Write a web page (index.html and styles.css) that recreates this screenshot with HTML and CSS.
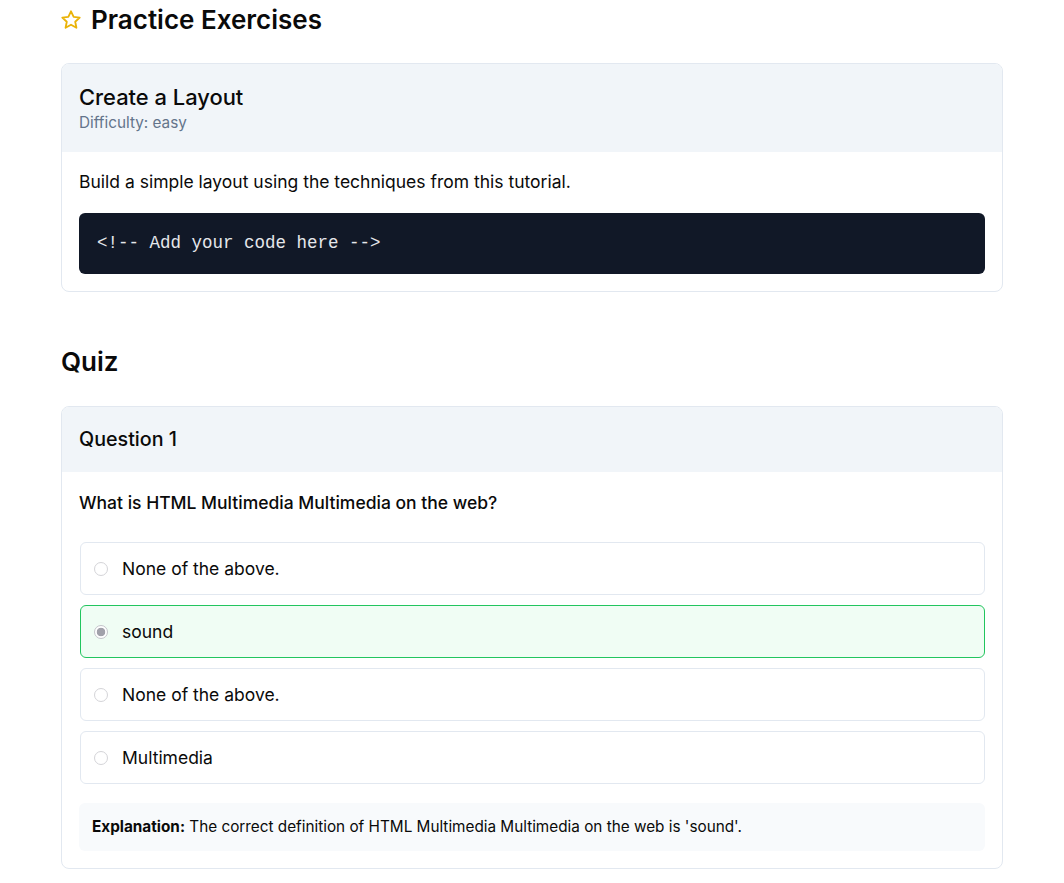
FILE: index.html
```html
<!DOCTYPE html>
<html lang="en">
<head>
<meta charset="utf-8">
<title>Practice Exercises</title>
<link rel="stylesheet" href="styles.css">
</head>
<body>
<main class="page">
  <section class="section">
    <h2 class="section-title">
      <svg class="star" width="22" height="22" viewBox="0 0 24 24" fill="none" stroke="#eab308" stroke-width="2" stroke-linejoin="round"><polygon points="12 2.5 14.9 8.6 21.5 9.4 16.6 13.9 17.9 20.5 12 17.2 6.1 20.5 7.4 13.9 2.5 9.4 9.1 8.6"/></svg>
      Practice Exercises
    </h2>
    <div class="card">
      <div class="card-header tall">
        <h3 class="card-title">Create a Layout</h3>
        <div class="difficulty">Difficulty: easy</div>
      </div>
      <div class="card-body">
        <p class="desc">Build a simple layout using the techniques from this tutorial.</p>
        <pre class="code">&lt;!-- Add your code here --&gt;</pre>
      </div>
    </div>
  </section>

  <section class="section quiz">
    <h2 class="section-title">Quiz</h2>
    <div class="card">
      <div class="card-header">
        <h3 class="question-title">Question 1</h3>
      </div>
      <div class="card-body">
        <p class="question">What is HTML Multimedia Multimedia on the web?</p>
        <div class="options">
          <label class="option"><input type="radio" name="q1" disabled><span>None of the above.</span></label>
          <label class="option correct"><input type="radio" name="q1" checked disabled><span>sound</span></label>
          <label class="option"><input type="radio" name="q1" disabled><span>None of the above.</span></label>
          <label class="option"><input type="radio" name="q1" disabled><span>Multimedia</span></label>
        </div>
        <div class="explanation"><strong>Explanation:</strong> The correct definition of HTML Multimedia Multimedia on the web is 'sound'.</div>
      </div>
    </div>
  </section>
</main>
</body>
</html>
```
FILE: styles.css
```css
* { box-sizing: border-box; }
html, body { margin: 0; padding: 0; background: #fff; }
body {
  font-family: Inter, "Noto Sans", sans-serif;
  color: #0a0a0a;
}
.page {
  width: 942px;
  margin-left: 61px;
  padding-top: 2px;
}
.section-title {
  display: flex;
  align-items: center;
  gap: 9px;
  margin: 0 0 26px;
  font-size: 26px;
  line-height: 35px;
  font-weight: 600;
  color: #0a0a0a;
}
.star { flex: none; margin-left: -1px; }
.quiz { margin-top: 52px; }
.quiz .section-title { margin-bottom: 27px; }
.card {
  border: 1px solid #e2e8f0;
  border-radius: 8px;
  overflow: hidden;
  background: #fff;
}
.card-header {
  background: #f1f5f9;
  padding: 17px 17px 18px;
}
.card-header.tall { padding: 18px 17px 18px; }
.card-title {
  margin: 0;
  font-size: 21.9px;
  line-height: 30px;
  font-weight: 500;
  color: #0a0a0a;
}
.difficulty {
  font-size: 15.3px;
  line-height: 22px;
  color: #64748b;
}
.question-title {
  margin: 0;
  font-size: 19.7px;
  line-height: 30px;
  font-weight: 500;
  color: #0a0a0a;
}
.card-body { padding: 17px 17px 17px; }
.quiz .card-body { padding-top: 18px; }
.desc {
  margin: 0 0 18px;
  font-size: 17.5px;
  line-height: 26px;
  color: #0a0a0a;
}
.code {
  margin: 0;
  background: #111827;
  color: #e5e7eb;
  border-radius: 6px;
  padding: 17px 18px 18px;
  font-family: "Liberation Mono", monospace;
  font-size: 17.5px;
  line-height: 26px;
}
.question {
  margin: 0 0 26px;
  font-size: 17.5px;
  line-height: 26px;
  font-weight: 500;
  color: #0a0a0a;
}
.options {
  display: flex;
  flex-direction: column;
  gap: 10px;
  margin-left: 1px;
}
.option {
  display: flex;
  align-items: center;
  border: 1px solid #e2e8f0;
  border-radius: 6px;
  padding: 13px 13px;
  font-size: 17.5px;
  line-height: 25px;
  color: #0a0a0a;
  background: #fff;
}
.option input {
  appearance: none;
  -webkit-appearance: none;
  width: 14px;
  height: 14px;
  margin: 0 14px 0 0;
  flex: none;
  border-radius: 50%;
  border: 1px solid #d4d4d8;
  background: #fff;
}
.option input:checked {
  border-color: #c4c4ca;
  background: radial-gradient(circle, #a1a1aa 0 4px, #fff 4.6px);
}
.option.correct {
  background: #f0fdf4;
  border-color: #22c55e;
}
.explanation {
  margin-top: 19px;
  background: #f8fafc;
  border-radius: 6px;
  padding: 12px 13px;
  font-size: 15.3px;
  line-height: 24px;
  color: #0a0a0a;
}
.explanation strong { font-weight: 700; }
```
